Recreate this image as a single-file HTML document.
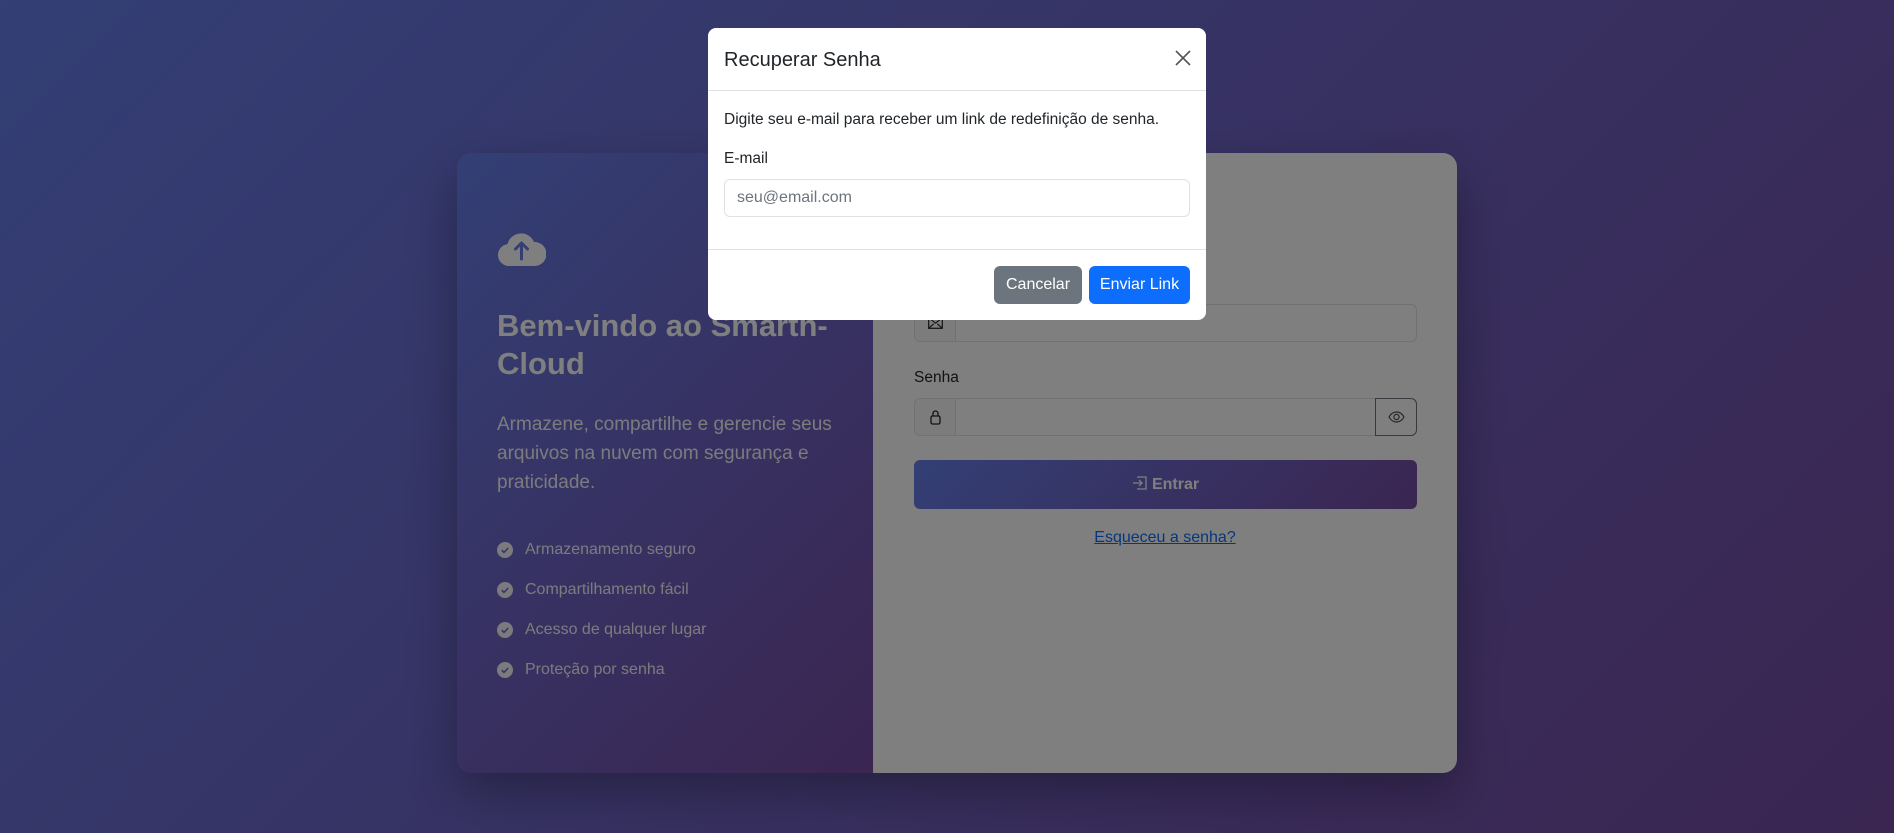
<!DOCTYPE html>
<html><head><meta charset="utf-8"><style>
*{box-sizing:border-box;margin:0;padding:0}
html,body{width:1894px;height:833px;overflow:hidden}
body{font-family:"Liberation Sans",sans-serif;background:linear-gradient(135deg,#667eea 0%,#764ba2 100%);position:relative;color:#212529}
.card{position:absolute;left:457px;top:153px;width:1000px;height:620px;border-radius:14px;overflow:hidden;display:flex;box-shadow:0 20px 50px rgba(0,0,0,.3)}
.left{width:416px;background:linear-gradient(135deg,#667eea,#764ba2);color:#fff;padding:0 40px;position:relative}
.right{flex:1;background:#fff;position:relative}
.abs{position:absolute}
h1{font-size:31px;font-weight:bold;line-height:38px}
.lead{font-size:19px;font-weight:300;line-height:29px;opacity:.95}
.li{font-size:16px;display:flex;align-items:center;gap:12px;opacity:.95}
.ov{position:absolute;inset:0;background:rgba(0,0,0,.5)}
.modal{position:absolute;left:708px;top:28px;width:498px;height:292px;background:#fff;border-radius:8px}
.inp{position:absolute;border:1px solid #dee2e6;border-radius:6px;background:#fff}
.lbl{position:absolute;font-size:15.5px}
</style></head><body>
<div class="card">
 <div class="left">
  <svg class="abs" style="left:40px;top:79px" width="49" height="34" viewBox="0 0 49 34"><path d="M12 34a11 11 0 0 1-1.5-21.9A14 14 0 0 1 37 10a11 11 0 0 1 1 24z" fill="#fff"/><path d="M24.5 27V11M18.5 17l6-6 6 6" stroke="#667eea" stroke-width="3" fill="none" stroke-linecap="round" stroke-linejoin="round"/></svg>
  <h1 class="abs" style="left:40px;top:154px;width:340px">Bem-vindo ao Smarth-Cloud</h1>
  <div class="lead abs" style="left:40px;top:257px;width:370px">Armazene, compartilhe e gerencie seus arquivos na nuvem com segurança e praticidade.</div>
  <div class="abs" style="left:40px;top:377px">
   <div class="li" style="height:40px"><svg width="16" height="16" viewBox="0 0 16 16"><circle cx="8" cy="8" r="8" fill="#fff"/><path d="M4.8 8.2l2.2 2.2 4.2-4.4" stroke="#6f63c8" stroke-width="1.5" fill="none"/></svg>Armazenamento seguro</div>
   <div class="li" style="height:40px"><svg width="16" height="16" viewBox="0 0 16 16"><circle cx="8" cy="8" r="8" fill="#fff"/><path d="M4.8 8.2l2.2 2.2 4.2-4.4" stroke="#6f63c8" stroke-width="1.5" fill="none"/></svg>Compartilhamento fácil</div>
   <div class="li" style="height:40px"><svg width="16" height="16" viewBox="0 0 16 16"><circle cx="8" cy="8" r="8" fill="#fff"/><path d="M4.8 8.2l2.2 2.2 4.2-4.4" stroke="#6f63c8" stroke-width="1.5" fill="none"/></svg>Acesso de qualquer lugar</div>
   <div class="li" style="height:40px"><svg width="16" height="16" viewBox="0 0 16 16"><circle cx="8" cy="8" r="8" fill="#fff"/><path d="M4.8 8.2l2.2 2.2 4.2-4.4" stroke="#6f63c8" stroke-width="1.5" fill="none"/></svg>Proteção por senha</div>
  </div>
 </div>
 <div class="right">
  <div class="inp" style="left:41px;top:151px;width:503px;height:38px"><div style="position:absolute;left:0;top:0;width:41px;height:36px;background:#f8f9fa;border-right:1px solid #dee2e6;border-radius:6px 0 0 6px"><svg style="position:absolute;left:13px;top:12px" width="15" height="12" viewBox="0 0 15 12"><rect x="0.7" y="0.7" width="13.6" height="10.6" fill="none" stroke="#212529" stroke-width="1.2"/><path d="M0.7 0.7l6.8 5.5 6.8-5.5M0.7 11.3l5-4.5M14.3 11.3l-5-4.5" fill="none" stroke="#212529" stroke-width="1.1"/></svg></div></div>
  <div class="lbl" style="left:41px;top:216px">Senha</div>
  <div class="inp" style="left:41px;top:245px;width:503px;height:38px">
   <div style="position:absolute;left:0;top:0;width:41px;height:36px;background:#f8f9fa;border-right:1px solid #dee2e6;border-radius:6px 0 0 6px"><svg style="position:absolute;left:15px;top:10px" width="11" height="16" viewBox="0 0 11 16"><rect x="1" y="7" width="9" height="8" rx="1.5" fill="none" stroke="#212529" stroke-width="1.3"/><path d="M3 7V4.5a2.5 2.5 0 0 1 5 0V7" fill="none" stroke="#212529" stroke-width="1.3"/></svg></div>
   <div style="position:absolute;right:-1px;top:-1px;width:42px;height:38px;border:1px solid #6c757d;border-radius:0 6px 6px 0"><svg style="position:absolute;left:12px;top:12px" width="17" height="12" viewBox="0 0 17 12"><path d="M1 6C3 2.5 5.5 1 8.5 1S14 2.5 16 6C14 9.5 11.5 11 8.5 11S3 9.5 1 6z" fill="none" stroke="#495057" stroke-width="1.2"/><circle cx="8.5" cy="6" r="2.6" fill="none" stroke="#495057" stroke-width="1.2"/></svg></div>
  </div>
  <div style="position:absolute;left:41px;top:307px;width:503px;height:49px;border-radius:6px;background:linear-gradient(135deg,#667eea,#764ba2);color:#fff;font-weight:bold;font-size:16px;text-align:center;line-height:49px">
   <svg width="16" height="16" viewBox="0 0 16 16" style="vertical-align:-2px;margin-right:4px"><path d="M6 3V2h8v12H6v-1M1 8h9M7 5l3 3-3 3" fill="none" stroke="#fff" stroke-width="1.3"/></svg>Entrar</div>
  <div style="position:absolute;left:0;width:584px;top:376px;text-align:center;font-size:16px;color:#0d6efd;text-decoration:underline">Esqueceu a senha?</div>
 </div>
</div>
<div class="ov"></div>
<div class="modal">
 <div style="position:absolute;left:16px;top:21px;font-size:20px;font-weight:500">Recuperar Senha</div>
 <svg style="position:absolute;left:467px;top:22px" width="16" height="16" viewBox="0 0 16 16"><path d="M1 1l14 14M15 1L1 15" stroke="#555" stroke-width="1.6"/></svg>
 <div style="position:absolute;left:0;right:0;top:62px;border-top:1px solid #dee2e6"></div>
 <div style="position:absolute;left:16px;top:83px;font-size:15.5px">Digite seu e-mail para receber um link de redefinição de senha.</div>
 <div class="lbl" style="left:16px;top:122px">E-mail</div>
 <div class="inp" style="left:16px;top:151px;width:466px;height:38px;padding-left:12px;line-height:36px;font-size:16px;color:#6c757d">seu@email.com</div>
 <div style="position:absolute;left:0;right:0;top:221px;border-top:1px solid #dee2e6"></div>
 <div style="position:absolute;left:286px;top:238px;width:88px;height:38px;background:#6c757d;color:#fff;border-radius:6px;text-align:center;line-height:38px;font-size:16px">Cancelar</div>
 <div style="position:absolute;left:381px;top:238px;width:101px;height:38px;background:#0d6efd;color:#fff;border-radius:6px;text-align:center;line-height:38px;font-size:16px">Enviar Link</div>
</div>
</body></html>
